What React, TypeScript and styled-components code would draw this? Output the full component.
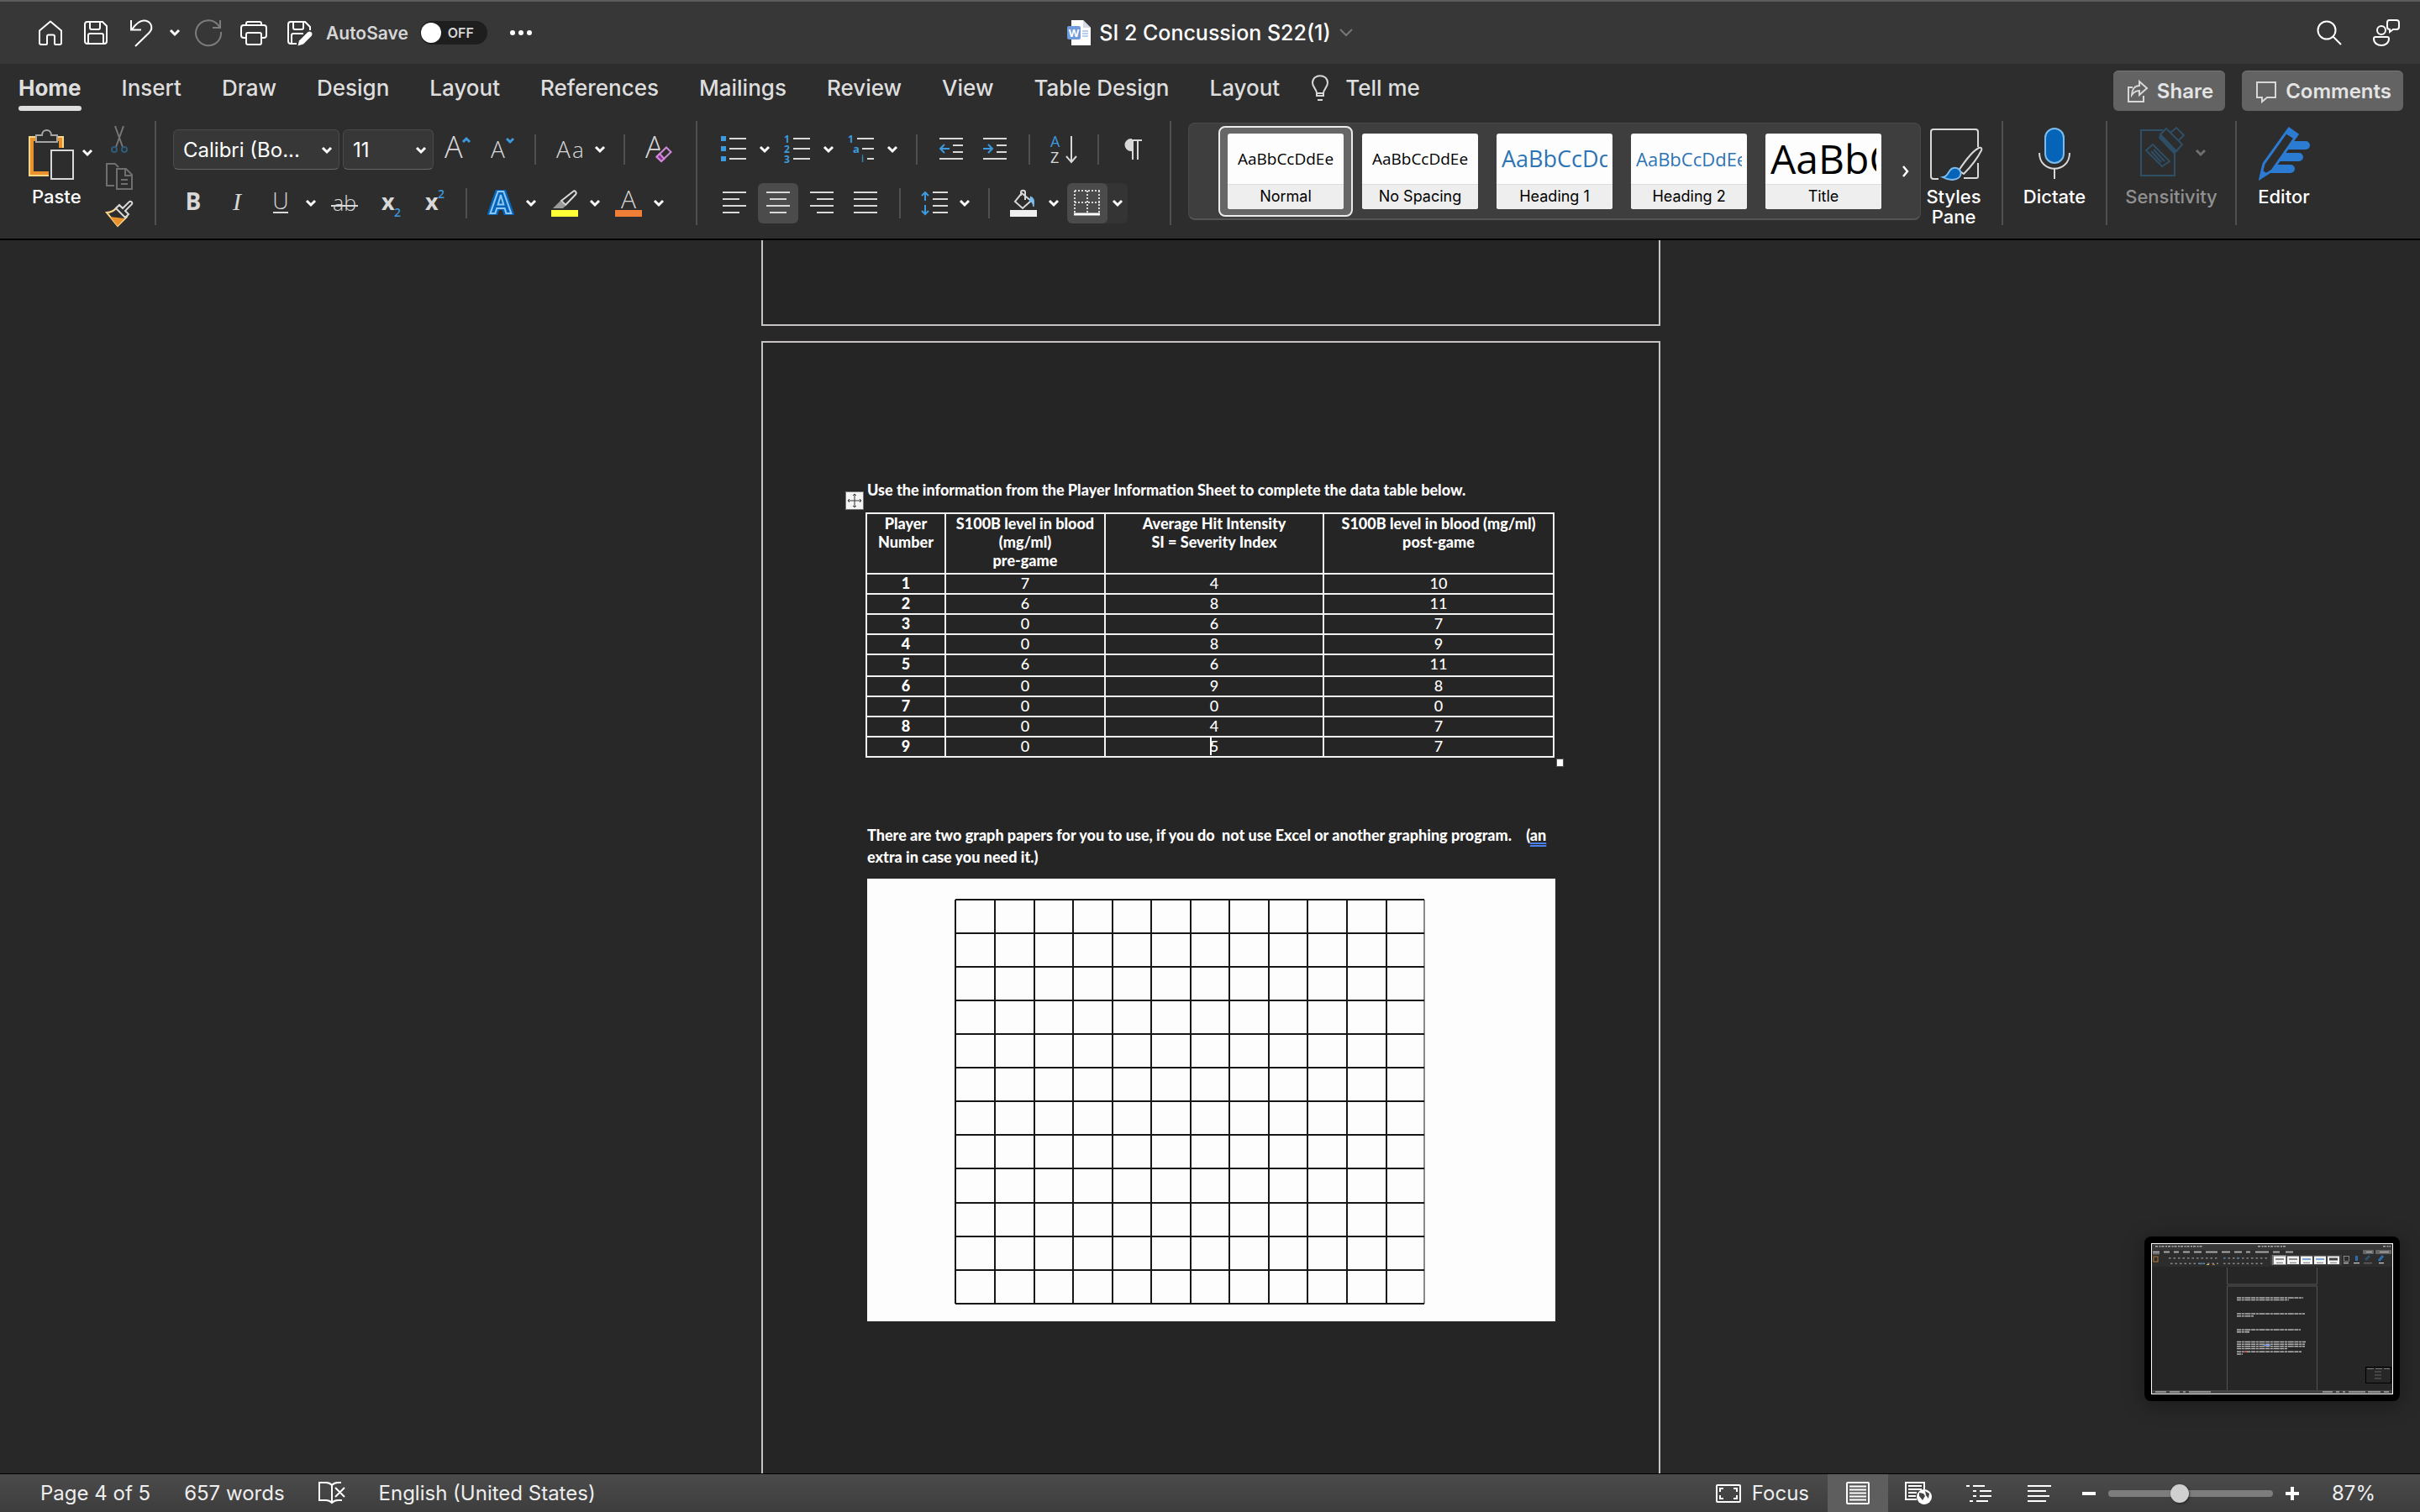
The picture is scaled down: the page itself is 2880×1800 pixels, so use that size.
import React from "react";
import styled, { createGlobalStyle, css } from "styled-components";

const ui = `Inter, "Liberation Sans", sans-serif`;
const glyph = `"Open Sans", "Noto Sans", sans-serif`;
const docFont = `Lato, "Liberation Sans", sans-serif`;
const blue = "#3d9ade";
const ink = "#d8d8d8";
const panel = "#2d2d2d";

const Global = createGlobalStyle`
  *, *::before, *::after { box-sizing: border-box; }
  body { margin: 0; background: #282828; font-family: ${ui}; }
  button, select, input { font: inherit; color: inherit; margin: 0; }
  button { background: none; border: 0; padding: 0; }
  svg { display: block; flex: none; overflow: visible; }
`;

const Window = styled.div`
  height: 100vh;
  display: flex;
  flex-direction: column;
  overflow: hidden;
  color: #ffffff;
`;

/* ---------- title bar ---------- */
const TitleBar = styled.header`
  flex: none;
  height: 76px;
  display: grid;
  grid-template-columns: 1fr auto 1fr;
  align-items: center;
  background: #373737;
  border-top: 2px solid #5c5c5c;
`;
const QuickBar = styled.div`
  display: flex;
  align-items: center;
  padding-left: 33px;
`;
const QuickButton = styled.button<{ $narrow?: boolean }>`
  width: ${(p) => (p.$narrow ? 26 : 54)}px;
  height: 48px;
  display: flex;
  align-items: center;
  justify-content: center;
`;
const AutoSave = styled.label`
  display: flex;
  align-items: center;
  gap: 14px;
  margin: 0 13px 0 5px;
  font-size: 21px;
  font-weight: 600;
  color: #d6d6d6;
`;
const ToggleTrack = styled.span`
  position: relative;
  width: 80px;
  height: 28px;
  border-radius: 14px;
  background: #1e1e1e;
  display: flex;
  align-items: center;
  justify-content: flex-end;
  padding-right: 16px;
  font-size: 16px;
  font-weight: 600;
`;
const ToggleBox = styled.input`
  appearance: none;
  position: absolute;
  left: 1px;
  top: 2px;
  width: 24px;
  height: 24px;
  border-radius: 12px;
  background: #ffffff;
`;
const DocTitle = styled.h1`
  margin: 0;
  display: flex;
  align-items: center;
  gap: 10px;
  font-size: 25px;
  font-weight: 500;
`;
const TitleRight = styled.div`
  display: flex;
  justify-content: flex-end;
  gap: 14px;
  padding-right: 13px;
`;

/* ---------- tabs ---------- */
const TabBar = styled.nav`
  flex: none;
  height: 68px;
  display: flex;
  justify-content: space-between;
  padding: 0 20px 0 22px;
  background: ${panel};
`;
const TabArea = styled.div`
  display: flex;
  align-items: flex-start;
  gap: 38px;
`;
const Tabs = styled.div`
  display: flex;
  gap: 48px;
`;
const Tab = styled.button<{ $active?: boolean }>`
  position: relative;
  height: 56px;
  padding-top: 1px;
  display: flex;
  align-items: center;
  gap: 20px;
  font-size: 26px;
  line-height: 30px;
  font-weight: ${(p) => (p.$active ? 700 : 500)};
  color: #dedede;
  ${(p) =>
    p.$active &&
    css`
      &::after {
        content: "";
        position: absolute;
        left: 0;
        right: 0;
        bottom: 0;
        height: 6px;
        border-radius: 3px;
        background: #dedede;
      }
    `}
`;
const TabActions = styled.div`
  display: flex;
  gap: 20px;
  padding-top: 8px;
`;
const ActionButton = styled.button`
  height: 48px;
  padding: 0 14px 0 16px;
  display: flex;
  align-items: center;
  gap: 10px;
  border-radius: 6px;
  border-top: 1px solid #777777;
  background: #636363;
  font-size: 24px;
  font-weight: 600;
  color: #e4e4e4;
`;

/* ---------- ribbon ---------- */
const Ribbon = styled.div`
  flex: none;
  height: 142px;
  display: flex;
  align-items: flex-start;
  background: ${panel};
  border-bottom: 2px solid #000000;
`;
const Divider = styled.span<{ $small?: boolean }>`
  flex: none;
  width: 2px;
  height: ${(p) => (p.$small ? 36 : 124)}px;
  margin: 0 ${(p) => (p.$small ? 12 : 0)}px;
  background: #505050;
`;
const ToolGroup = styled.div`
  flex: none;
  display: flex;
  flex-direction: column;
  gap: 16px;
  padding: 10px 20px 0;
`;
const ToolRow = styled.div`
  height: 48px;
  display: flex;
  align-items: center;
  gap: 4px;
`;
const Tool = styled.button<{ $active?: boolean }>`
  width: 48px;
  height: 48px;
  display: flex;
  align-items: center;
  justify-content: center;
  border-radius: 6px;
  background: ${(p) => (p.$active ? "#4b4b4b" : "none")};
`;
const Split = styled.span<{ $active?: boolean }>`
  display: flex;
  border-radius: 6px;
  background: ${(p) => (p.$active ? "#343434" : "none")};
`;
const Drop = styled.button`
  width: 24px;
  height: 48px;
  display: flex;
  align-items: center;
  justify-content: center;
`;
const SelectWrap = styled.label<{ $w: number }>`
  position: relative;
  width: ${(p) => p.$w}px;
  height: 48px;
`;
const SelectBox = styled.select`
  appearance: none;
  width: 100%;
  height: 48px;
  padding: 0 0 0 11px;
  border: 1px solid #4a4a4a;
  border-bottom-color: #666666;
  border-radius: 6px;
  background: #373737;
  font-size: 24px;
  color: #ffffff;
`;
const SelectArrow = styled.span`
  position: absolute;
  right: 9px;
  top: 21px;
  pointer-events: none;
`;
const Clipboard = styled.div`
  flex: none;
  display: flex;
  padding: 0 18px 0 32px;
`;
const BigArea = styled.div<{ $w: number; $end?: number }>`
  flex: none;
  width: ${(p) => p.$w}px;
  padding: 6px ${(p) => p.$end ?? 0}px 0 0;
`;
const Big = styled.button<{ $dim?: boolean; $start?: boolean }>`
  width: 100%;
  display: flex;
  flex-direction: column;
  align-items: ${(p) => (p.$start ? "flex-start" : "center")};
  gap: 8px;
  font-size: 22px;
  line-height: 24px;
  font-weight: 500;
  color: ${(p) => (p.$dim ? "#919191" : "#ffffff")};
`;
const BigIcon = styled.span`
  display: flex;
  align-items: center;
  gap: 6px;
`;
const PasteLabel = styled.span`
  padding-left: 6px;
`;
const MiniColumn = styled.div`
  display: flex;
  flex-direction: column;
  padding-left: 2px;
`;
const MiniTool = styled.button`
  width: 48px;
  height: 44px;
  display: flex;
  align-items: center;
  justify-content: center;
`;
const Gallery = styled.div`
  flex: 0 1 872px;
  min-width: 0;
  height: 116px;
  margin: 2px 0 0 20px;
  padding-left: 35px;
  display: flex;
  align-items: center;
  justify-content: space-between;
  border: 1px solid #4a4a4a;
  border-bottom: 2px solid #555555;
  border-radius: 8px;
  background: #3e3e3e;
`;
const Cards = styled.div`
  display: flex;
  overflow: hidden;
`;
const StyleSlot = styled.button<{ $active?: boolean }>`
  flex: none;
  width: 160px;
  height: 108px;
  padding: 7px 9px;
  border: 2px solid ${(p) => (p.$active ? "#ececec" : "transparent")};
  border-radius: 8px;
  background: ${(p) => (p.$active ? "#666666" : "none")};
`;
const StyleCard = styled.span`
  height: 90px;
  display: flex;
  flex-direction: column;
  border-radius: 3px;
  overflow: hidden;
  background: #fdfdfd;
  color: #000000;
`;
const Preview = styled.span<{ $size: number; $color: string }>`
  flex: 1;
  min-height: 0;
  margin: 0 6px;
  display: flex;
  align-items: center;
  justify-content: ${(p) => (p.$size > 20 ? "flex-start" : "center")};
  overflow: hidden;
  white-space: nowrap;
  font-family: ${glyph};
  font-size: ${(p) => p.$size}px;
  line-height: 60px;
  color: ${(p) => p.$color};
`;
const CardName = styled.span`
  height: 30px;
  border-top: 1px solid #dddddd;
  background: #eeeeee;
  font-size: 18px;
  line-height: 28px;
  font-weight: 400;
`;
const GalleryMore = styled.button`
  width: 34px;
  height: 100px;
  display: flex;
  align-items: center;
  justify-content: center;
`;

/* ---------- document ---------- */
const Canvas = styled.main`
  flex: 1;
  min-height: 0;
  display: flex;
  flex-direction: column;
  align-items: center;
  gap: 18px;
  padding-left: 2px;
  overflow: hidden;
  background: #282828;
`;
const PrevPage = styled.div`
  flex: none;
  width: 1070px;
  height: 102px;
  border: 2px solid #c6c2c6;
  border-top: 0;
  background: #252525;
`;
const Page = styled.article`
  flex: 1;
  width: 1070px;
  padding: 162px 123px 0 124px;
  border: 2px solid #c6c2c6;
  border-bottom: 0;
  background: #252525;
  font-family: ${docFont};
  font-size: 18px;
  line-height: 26px;
`;
const Para = styled.p`
  margin: 0;
  font-weight: 900;
  white-space: pre-wrap;
`;
const Flagged = styled.span`
  text-decoration: underline double 2px #4b80f0;
  text-underline-offset: 2px;
`;
const TableHolder = styled.div`
  position: relative;
  margin: 14px 0 79px -2px;
`;
const MoveHandle = styled.span`
  position: absolute;
  left: -24px;
  top: -25px;
  width: 22px;
  height: 22px;
  border: 1px solid #777777;
  background: #f4f4f4;
`;
const SizeHandle = styled.span`
  position: absolute;
  right: -10px;
  bottom: -11px;
  width: 9px;
  height: 10px;
  border: 1px solid #555555;
  background: #ffffff;
`;
const DataTable = styled.table`
  width: 820px;
  table-layout: fixed;
  border-collapse: collapse;
  text-align: center;
  line-height: 20px;
  th,
  td {
    height: 24px;
    padding: 0;
    border: 2px solid #f2f2f2;
    vertical-align: top;
    font-weight: 500;
  }
  th {
    font-weight: 900;
  }
  thead th {
    height: 72px;
    line-height: 22px;
  }
  tbody tr:nth-child(5) td {
    height: 26px;
  }
`;
const Caret = styled.span`
  position: relative;
  &::before {
    content: "";
    position: absolute;
    left: 0;
    top: 0;
    width: 2px;
    height: 22px;
    background: #ffffff;
  }
`;
const GraphPaper = styled.svg`
  width: 100%;
  height: auto;
  margin-top: 13px;
  background: #fdfdfd;
`;
const Thumbnail = styled.aside`
  position: absolute;
  right: 24px;
  bottom: 132px;
  padding: 8px;
  border-radius: 8px;
  background: #000000;
  box-shadow: 0 4px 24px rgba(0, 0, 0, 0.35);
`;

/* ---------- status bar ---------- */
const StatusBar = styled.footer`
  flex: none;
  height: 46px;
  display: flex;
  justify-content: space-between;
  border-top: 1px solid #000000;
  background: linear-gradient(#4b4b4b, #3d3d3d);
  font-size: 24px;
  color: #eeeeee;
`;
const StatusSide = styled.div<{ $gap?: number; $left?: number; $right?: number }>`
  display: flex;
  align-items: center;
  gap: ${(p) => p.$gap ?? 0}px;
  padding: 0 ${(p) => p.$right ?? 0}px 0 ${(p) => p.$left ?? 0}px;
`;
const StatusButton = styled.button`
  display: flex;
  align-items: center;
  gap: 12px;
`;
const ViewButton = styled.button<{ $active?: boolean; $w?: number }>`
  width: ${(p) => p.$w ?? 72}px;
  height: 45px;
  display: flex;
  align-items: center;
  justify-content: center;
  background: ${(p) => (p.$active ? "#5e5e5e" : "none")};
`;
const Zoom = styled.input`
  appearance: none;
  width: 196px;
  height: 8px;
  border-radius: 4px;
  background: #7d7d7d;
  &::-webkit-slider-thumb {
    appearance: none;
    width: 22px;
    height: 22px;
    border-radius: 11px;
    background: #d0d0d0;
    box-shadow: 1px 1px 3px rgba(0, 0, 0, 0.5);
  }
`;
const Percent = styled.output`
  padding-left: 24px;
`;

/* ---------- drawings ---------- */
type IconProps = { children: React.ReactNode; w?: number; h?: number; c?: string; sw?: number };
const Icon = ({ children, w = 32, h = 32, c = ink, sw = 2 }: IconProps) => (
  <svg width={w} height={h} viewBox={`0 0 ${w} ${h}`} fill="none" stroke={c} strokeWidth={sw} aria-hidden="true">
    {children}
  </svg>
);
const Chevron = ({ c = "#ffffff" }: { c?: string }) => (
  <Icon w={12} h={8} c={c} sw={3}>
    <path d="M1 1l5 5 5-5" />
  </Icon>
);
type LetterProps = {
  children: string; x: number; y: number; s: number; c?: string; wt?: number; f?: string; it?: boolean; mid?: boolean;
};
const Letter = ({ children, x, y, s, c = ink, wt = 400, f = glyph, it, mid }: LetterProps) => (
  <text x={x} y={y} fontSize={s} fill={c} stroke="none" fontWeight={wt} fontFamily={f}
    fontStyle={it ? "italic" : "normal"} textAnchor={mid ? "middle" : "start"}>
    {children}
  </text>
);
const Lines = ({ rows }: { rows: [number, number][] }) => (
  <Icon>
    {rows.map(([a, b], i) => (
      <path key={i} d={`M${a} ${3 + i * 8}H${b}`} />
    ))}
  </Icon>
);

const quick = {
  home: <Icon c="#fff"><path d="M3 13.500L16 2.500l13 11V28a2 2 0 0 1-2 2h-5a1 1 0 0 1-1-1v-8.500a2 2 0 0 0-2-2h-5a2 2 0 0 0-2 2V29a1 1 0 0 1-1 1H5a2 2 0 0 1-2-2z" strokeLinejoin="round" /></Icon>,
  save: <Icon c="#fff"><path d="M6 3h18l5 5v18a3 3 0 0 1-3 3H6a3 3 0 0 1-3-3V6a3 3 0 0 1 3-3zM9 3v7a2 2 0 0 0 2 2h8a2 2 0 0 0 2-2V3M7 29V19a2 2 0 0 1 2-2h14a2 2 0 0 1 2 2v10" /></Icon>,
  undo: <Icon c="#fff"><path d="M4 1v11.500h12M5 12C10 5 14 1.500 19 1.500c9 0 12 9 6.500 14.500L9 32" /></Icon>,
  redo: <Icon c="#7c7c7c"><path d="M31 15a15 15 0 1 1-4.500-9.500L30 10M30 1v9H21" /></Icon>,
  print: <Icon c="#fff"><path d="M7 22H4a3 3 0 0 1-3-3V10a3 3 0 0 1 3-3h24a3 3 0 0 1 3 3v9a3 3 0 0 1-3 3h-3M7 7V5a2 2 0 0 1 2-2h14a2 2 0 0 1 2 2v2" /><rect x="7" y="16" width="18" height="14" rx="2" /></Icon>,
  saveEdit: <Icon c="#fff"><path d="M13 29H6a3 3 0 0 1-3-3V6a3 3 0 0 1 3-3h17l6 6v4M9 3v7a2 2 0 0 0 2 2h8a2 2 0 0 0 2-2V3M7 29V19a2 2 0 0 1 2-2h12" /><path d="M26 15.500c3-3 7.500 1 4.500 4.500l-9.500 9.500-6.500 2 1.500-6z" fill="#fff" stroke="none" /></Icon>,
};

const EraseFormat = (
  <Icon>
    <Letter x={0} y={26} s={36} wt={300}>A</Letter>
    <path d="M25.300 12.300L32 19 19.300 31.300 12.700 24.700z" fill={panel} stroke={panel} strokeWidth={5} />
    <path d="M25 13.500L30.500 19 19 30 13.500 24.700z" stroke="#cf8ad6" />
    <path d="M17 21l5.500 6L19 30l-5.500-5.300z" fill="#8b2f97" stroke="#cf8ad6" />
  </Icon>
);
const BulletIcon = (
  <Icon>
    {[0, 12, 24].map((y) => (
      <g key={y}><rect x="0" y={y} width="6" height="6" fill={blue} stroke="none" /><path d={`M10 ${y + 3}H30`} /></g>
    ))}
  </Icon>
);
const NumberIcon = (
  <Icon>
    {["1", "2", "3"].map((n, i) => (
      <g key={n}><Letter x={-1} y={8 + i * 12} s={12} wt={700} c={blue}>{n}</Letter><path d={`M10 ${3 + i * 12}H30`} /></g>
    ))}
  </Icon>
);
const MultiIcon = (
  <Icon>
    <Letter x={-1} y={8} s={12} wt={700} c={blue}>1</Letter>
    <Letter x={5} y={20} s={13} wt={700} c={blue}>a</Letter>
    <Letter x={15} y={31} s={13} c={blue}>i</Letter>
    <path d="M10 3H30M16 15H30M22 27H30" />
  </Icon>
);
const IndentIcon = ({ out }: { out?: boolean }) => (
  <Icon>
    <path d="M2 3H30M18 11H30M18 19H30M2 27H30" />
    <path d={out ? "M14 15H3M8 10l-5 5 5 5" : "M2 15H13M8 10l5 5-5 5"} stroke={blue} />
  </Icon>
);
const SortIcon = (
  <Icon>
    <Letter x={0} y={13} s={18} c={blue}>A</Letter>
    <Letter x={0} y={32} s={18}>Z</Letter>
    <path d="M25 0V30M19 24l6 7 6-7" />
  </Icon>
);
const PilcrowIcon = (
  <Icon>
    <path d="M14 5v12a6 6 0 0 1 0-13z" fill={ink} />
    <path d="M13 5H27M16 5V28M22 5V28" />
  </Icon>
);
const GlowLetter = styled.text`
  font-family: ${glyph};
  font-size: 36px;
  font-weight: 700;
  text-anchor: middle;
  fill: #0563b8;
  stroke: #8cc7f2;
  stroke-width: 2px;
  filter: drop-shadow(2px 0 0 #0563b8) drop-shadow(-2px 0 0 #0563b8) drop-shadow(0 1px 0 #0563b8) drop-shadow(0 -1px 0 #0563b8);
`;
const TextEffects = (
  <Icon>
    <GlowLetter x="16" y="28">A</GlowLetter>
  </Icon>
);
const Highlighter = (
  <Icon>
    <path d="M26 2c2-2 5 1 3 3.500L17 18l-5-5z" />
    <path d="M11 13l6 6-3 3H2z" fill="#9a9a9a" stroke="none" />
    <rect y="24" width="32" height="8" fill="#ffff38" stroke="none" />
  </Icon>
);
const FontColor = (
  <Icon>
    <Letter x={16} y={22} s={30} wt={300} mid>A</Letter>
    <rect y="24" width="32" height="8" fill="#ef7f36" stroke="none" />
  </Icon>
);
const SpacingIcon = (
  <Icon>
    <path d="M14 3H32M14 11H32M14 19H32M14 27H32" />
    <path d="M5 13V3M1 7l4-4 4 4M5 18v11M1 25l4 4 4-4" stroke={blue} />
  </Icon>
);
const BucketIcon = (
  <Icon>
    <path d="M14 4l11 9-10 9-9-8zM13 7V3c0-3 5-3 5 0v9" />
    <path d="M24 8c5 1 5 6 4 12-1-4-2-6-5-7" fill="#7cbcec" stroke="#7cbcec" strokeWidth="1" />
    <rect y="24" width="32" height="8" fill="#efefef" stroke="none" />
  </Icon>
);
const BordersIcon = (
  <Icon>
    <path d="M1 1H31M1 15H31M1 1V27M16 1V27M30 1V27" strokeDasharray="2 2" />
    <path d="M0 29H31" stroke="#fff" strokeWidth="3" />
  </Icon>
);
const PasteIcon = (
  <Icon w={60} h={64}>
    <rect x="3" y="13" width="40" height="46" fill="#e8912d" stroke="#fbd789" />
    <rect x="8" y="18" width="30" height="36" fill={panel} stroke="none" />
    <path d="M11 19V11h7c0-8 11-8 11 0h7v8z" fill={panel} stroke="#a5a5a5" />
    <rect x="26" y="26" width="32" height="38" fill={panel} stroke="none" />
    <rect x="29" y="29" width="26" height="34" stroke={ink} />
  </Icon>
);
const CutIcon = (
  <Icon c="#777">
    <path d="M11 0l9 25M21 0l-9 25" />
    <g stroke="#2f5c7b"><circle cx="10" cy="28" r="3" /><circle cx="22" cy="28" r="3" /></g>
  </Icon>
);
const CopyIcon = (
  <Icon c="#6f6f6f">
    <path d="M10 27H1V1h10l4 4M13 7h11l7 7v17H13zM23 7v8h8M18 20h8M18 25h8" />
  </Icon>
);
const BrushIcon = (
  <Icon>
    <path d="M1 15q7 0 12-6l12 11-11 11z" fill={panel} stroke="#fbd789" />
    <path d="M5 20l17 2-8 9z" fill="#e8912d" stroke="none" />
    <path d="M12 10l4-4 4 4 8-8c2-1 4 1 3 3l-8 8 4 4-4 4z" fill={panel} />
  </Icon>
);
const StylesPaneIcon = (
  <Icon w={64} h={64}>
    <path d="M14 63H8a3 3 0 0 1-3-3V7a3 3 0 0 1 3-3h50a3 3 0 0 1 3 3v18M61 44v16a2 2 0 0 1-2 2H44" />
    <path d="M38 53c10-15 18-24 24-27 3-1 4 1 3 3-5 10-12 19-21 28z" fill={panel} />
    <path d="M19 61c8-1 6-10 13-11 6-1 10 4 8 9-2 5-12 7-21 2z" fill="#0563b8" stroke="#7cbcec" />
  </Icon>
);
const DictateIcon = (
  <Icon w={64} h={64}>
    <rect x="21" y="3" width="22" height="41" rx="11" fill="#0563b8" stroke="#7cbcec" />
    <path d="M14 32c0 25 36 25 36 0M32 51v12" />
  </Icon>
);
const SensitivityIcon = (
  <Icon w={64} h={64} c="#2f4f67">
    <path d="M31 5H5v54h40V32" />
    <path d="M19 22l20 20-9 6-19-19zM20 28l13 14M17 30l12 13" />
    <path d="M28 10l7-7 19 19-7 8z" />
    <path d="M28 11l19 19-3 2-17-18z" fill="#2f4f67" />
    <path d="M40 8l7-6 9 9-6 6" />
  </Icon>
);
const EditorIcon = (
  <Icon w={64} h={64} c="#2b7bd3">
    <path d="M35 18h23a5 5 0 0 1 0 10H30zM28 32h22a5 5 0 0 1 0 10H22zM22 46h18a5 5 0 0 1 0 10H12z" fill="#2b7bd3" stroke="none" />
    <path d="M38 3l10 7-30 43-14 9 4-17z" fill={panel} strokeWidth="3" />
    <path d="M38 2l11 8-4 6-11-7zM3 63l2-11 8 5z" fill="#2b7bd3" stroke="none" />
  </Icon>
);

const cols = [0, 47, 94, 140, 187, 233, 280, 326, 373, 419, 466, 513, 558];
const rowsY = [0, 40, 80, 120, 160, 200, 240, 280, 320, 361, 401, 441, 481];
const Graph = () => (
  <GraphPaper viewBox="0 0 819 527" role="img" aria-label="Blank graph paper, twelve by twelve squares">
    <g transform="translate(105 25)" stroke="#151815" strokeWidth="2" fill="none">
      {cols.map((x) => <path key={x} d={`M${x} 0V481`} strokeWidth={x === 558 ? 1 : 2} />)}
      {rowsY.map((y) => <path key={y} d={`M0 ${y}H558`} />)}
    </g>
  </GraphPaper>
);

const miniText: [number, number, number][] = [
  [102, 65, 79], [102, 67.5, 62], [102, 84, 81], [102, 86.8, 20], [102, 103, 76], [102, 105.6, 15],
  [102, 117.5, 82], [102, 120.2, 81], [102, 122.8, 81], [102, 125.5, 60], [102, 129.3, 77], [102, 132, 7],
];
const MiniWindow = () => (
  <svg width="288" height="180" viewBox="0 0 288 180" aria-hidden="true">
    <rect width="288" height="180" fill="#fff" />
    <rect x="1" y="1" width="286" height="178" fill="#262626" />
    <rect x="1" y="1" width="286" height="7" fill="#373737" />
    <rect x="1" y="8" width="286" height="20" fill="#2d2d2d" />
    <g stroke="#aaa" strokeWidth="1.500" strokeDasharray="3 1.500 2 1">
      <path d="M5 3.700H62M127 3.700H160M276 3.700H285" />
    </g>
    <path d="M2 10.500H10M15 10.500H22M27 10.500H33M38 10.500H46M51 10.500H60M65 10.500H79M84 10.500H94M99 10.500H108M113 10.500H118M124 10.500H140M145 10.500H153M160 10.500H169" stroke="#a8a8a8" strokeWidth="1.800" />
    <path d="M2 12.800H10" stroke="#ddd" strokeWidth="0.600" />
    <rect x="252" y="8" width="13" height="5" rx="1" fill="#666" />
    <rect x="267" y="8" width="19" height="5" rx="1" fill="#666" />
    <path d="M256 10.500H263M272 10.500H283" stroke="#bbb" />
    <rect x="3" y="16" width="5" height="6" fill="none" stroke="#b87a35" />
    <g stroke="#888" strokeWidth="1.600" strokeDasharray="2.500 3">
      <path d="M21 17.700H80M86 17.700H138M23 24.300H80M86 24.300H134" />
    </g>
    <path d="M58 24.300h3M86 17.700h2M102 17.700h2" stroke="#2f7ab0" strokeWidth="2" />
    <path d="M66 25.500h3" stroke="#c8c838" /><path d="M73 25.500h3" stroke="#b86a36" />
    <rect x="142" y="14" width="85" height="12" fill="#3e3e3e" />
    <rect x="144" y="14" width="17" height="12" fill="#777" />
    {[0, 1, 2, 3, 4].map((i) => (
      <g key={i}>
        <rect x={146 + i * 16} y="15.500" width="14" height="9.500" fill="#f4f4f4" />
        <path d={`M${148 + i * 16} 19h10`} stroke={i === 2 || i === 3 ? "#2e74b5" : "#444"} strokeWidth={i === 4 ? 3 : 1.2} />
        <path d={`M${149 + i * 16} 23.300h8`} stroke="#777" strokeWidth="1" />
      </g>
    ))}
    <rect x="229.500" y="15.500" width="6" height="6" fill="none" stroke="#aaa" strokeWidth="0.700" />
    <path d="M229 23.700h6M241 23.700h7M271 23.700h6" stroke="#ccc" strokeWidth="1.300" />
    <path d="M253 23.700h10" stroke="#666" strokeWidth="1.300" />
    <path d="M244.500 15v6M276 15l-5 6" stroke="#2b6db0" strokeWidth="3" />
    <path d="M255 20l5-5" stroke="#2f4f67" strokeWidth="3" />
    <path d="M90.500 29V49H197.500V29M90.500 175V51H197.500V175" fill="none" stroke="#555" />
    <g stroke="#b4b4b4" strokeWidth="1.600" strokeDasharray="5 0.700 3 0.700 7 0.700">
      {miniText.map(([x, y, w]) => <path key={y} d={`M${x} ${y}h${w}`} />)}
    </g>
    <path d="M134 121.500h8" stroke="#4b80f0" /><path d="M111 129.300h3" stroke="#e05050" strokeWidth="1.500" />
    <rect x="255.500" y="147.500" width="30" height="19" fill="#262626" stroke="#000" />
    <path d="M257 149.500h27" stroke="#777" strokeDasharray="8 2" />
    <path d="M266 153h8M266 157h8M266 161h8" stroke="#666" />
    <rect x="1" y="175" width="286" height="4" fill="#444" />
    <path d="M5 177h13M22 177h12M38 177h3M45 177h26M204 177h12M220 177h4M228 177h3M235 177h20M258 177h15M277 177h6" stroke="#aaa" strokeWidth="1.500" />
  </svg>
);

/* ---------- content ---------- */
const tabNames = ["Home", "Insert", "Draw", "Design", "Layout", "References", "Mailings", "Review", "View", "Table Design", "Layout"];
const styleCards = [
  { name: "Normal", text: "AaBbCcDdEe", size: 19, color: "#000000" },
  { name: "No Spacing", text: "AaBbCcDdEe", size: 19, color: "#000000" },
  { name: "Heading 1", text: "AaBbCcDdEe", size: 27, color: "#2e74b5" },
  { name: "Heading 2", text: "AaBbCcDdEe", size: 22, color: "#2e74b5" },
  { name: "Title", text: "AaBbCcDdEe", size: 48, color: "#000000" },
];
const readings = [
  [1, 7, 4, 10], [2, 6, 8, 11], [3, 0, 6, 7], [4, 0, 8, 9], [5, 6, 6, 11],
  [6, 0, 9, 8], [7, 0, 0, 0], [8, 0, 4, 7], [9, 0, 5, 7],
];

const SplitTool = ({ name, icon, active }: { name: string; icon: React.ReactNode; active?: boolean }) => (
  <Split $active={active}>
    <Tool $active={active} aria-label={name}>{icon}</Tool>
    <Drop aria-label={`${name} options`}><Chevron /></Drop>
  </Split>
);

export default function App() {
  return (
    <Window>
      <Global />
      <TitleBar>
        <QuickBar>
          <QuickButton aria-label="Home">{quick.home}</QuickButton>
          <QuickButton aria-label="Save">{quick.save}</QuickButton>
          <QuickButton aria-label="Undo">{quick.undo}</QuickButton>
          <QuickButton $narrow aria-label="Undo history"><Chevron /></QuickButton>
          <QuickButton aria-label="Redo">{quick.redo}</QuickButton>
          <QuickButton aria-label="Print">{quick.print}</QuickButton>
          <QuickButton aria-label="Save as">{quick.saveEdit}</QuickButton>
          <AutoSave>
            AutoSave
            <ToggleTrack><ToggleBox type="checkbox" />OFF</ToggleTrack>
          </AutoSave>
          <QuickButton aria-label="More">
            <Icon w={26} h={6} c="none"><g fill="#fff"><circle cx="3" cy="3" r="3" /><circle cx="13" cy="3" r="3" /><circle cx="23" cy="3" r="3" /></g></Icon>
          </QuickButton>
        </QuickBar>
        <DocTitle>
          <Icon w={28} h={30} c="none">
            <path d="M5 0h14l9 9v21H5z" fill="#fff" />
            <path d="M19 0l9 9h-9z" fill="#d5dbe6" />
            <path d="M18 13h7M18 16h7M18 19h7" stroke="#6fa0e0" strokeWidth="1" />
            <rect y="7" width="16" height="16" rx="2" fill="#6f9bdc" />
            <Letter x={8} y={20} s={13} wt={700} c="#ffffff" mid>W</Letter>
          </Icon>
          SI 2 Concussion S22(1)
          <Icon w={16} h={10} c="#777"><path d="M1 1l7 7 7-7" /></Icon>
        </DocTitle>
        <TitleRight>
          <QuickButton aria-label="Search"><Icon c="#fff"><circle cx="13" cy="13" r="10.500" /><path d="M20.500 20.500L30 30" /></Icon></QuickButton>
          <QuickButton aria-label="Account">
            <Icon c="#fff">
              <circle cx="10" cy="13" r="5" /><path d="M3 21h14a2 2 0 0 1 2 2c0 5-4 8-9 8s-9-3-9-8a2 2 0 0 1 2-2z" />
              <path d="M19 1h9a3 3 0 0 1 3 3v5a3 3 0 0 1-3 3h-4l-4 3v-3a3 3 0 0 1-3-3V4a3 3 0 0 1 2-3z" />
            </Icon>
          </QuickButton>
        </TitleRight>
      </TitleBar>

      <TabBar aria-label="Ribbon tabs">
        <TabArea>
          <Tabs>
            {tabNames.map((t, i) => <Tab key={i} $active={i === 0}>{t}</Tab>)}
          </Tabs>
          <Tab>
            <Icon w={20} h={32}>
              <path d="M6 22c0-5-5-7-5-12.500C1 -1.500 19 -1.500 19 9.500 19 15 14 17 14 22v3H6zM6 22h8M7 30h6" />
            </Icon>
            Tell me
          </Tab>
        </TabArea>
        <TabActions>
          <ActionButton>
            <Icon w={26} h={28}><path d="M7 9H2v17h18v-7M15 2l9 8-9 8v-5c-5 0-7 2-9 5 0-6 3-11 9-11z" /></Icon>
            Share
          </ActionButton>
          <ActionButton>
            <Icon w={26} h={28}><path d="M2 3h22v18H14l-6 5v-5H2z" /></Icon>
            Comments
          </ActionButton>
        </TabActions>
      </TabBar>

      <Ribbon>
        <Clipboard>
          <BigArea $w={84}>
            <Big $start>
              <BigIcon>{PasteIcon}<Chevron /></BigIcon>
              <PasteLabel>Paste</PasteLabel>
            </Big>
          </BigArea>
          <MiniColumn>
            <MiniTool aria-label="Cut">{CutIcon}</MiniTool>
            <MiniTool aria-label="Copy">{CopyIcon}</MiniTool>
            <MiniTool aria-label="Format painter">{BrushIcon}</MiniTool>
          </MiniColumn>
        </Clipboard>
        <Divider />
        <ToolGroup>
          <ToolRow>
            <SelectWrap $w={198}>
              <SelectBox aria-label="Font"><option>Calibri (Bo...</option></SelectBox>
              <SelectArrow><Chevron /></SelectArrow>
            </SelectWrap>
            <SelectWrap $w={108}>
              <SelectBox aria-label="Font size"><option>11</option></SelectBox>
              <SelectArrow><Chevron /></SelectArrow>
            </SelectWrap>
            <Tool aria-label="Increase font size">
              <Icon><Letter x={1} y={26} s={36} wt={300}>A</Letter><path d="M23 7l4-4 4 4" stroke={blue} strokeWidth="3" /></Icon>
            </Tool>
            <Tool aria-label="Decrease font size">
              <Icon><Letter x={4} y={26} s={28} wt={300}>A</Letter><path d="M23 3l4 4 4-4" stroke={blue} strokeWidth="3" /></Icon>
            </Tool>
            <Divider $small />
            <SplitTool name="Change case" icon={<Icon><Letter x={0} y={26} s={28} wt={300}>A</Letter><Letter x={19} y={26} s={26} wt={300}>a</Letter></Icon>} />
            <Divider $small />
            <Tool aria-label="Clear formatting">{EraseFormat}</Tool>
          </ToolRow>
          <ToolRow>
            <Tool aria-label="Bold"><Icon><Letter x={16} y={24} s={28} wt={700} mid>B</Letter></Icon></Tool>
            <Tool aria-label="Italic"><Icon><Letter x={16} y={24} s={30} f={`"Liberation Serif", serif`} it mid>I</Letter></Icon></Tool>
            <SplitTool name="Underline" icon={<Icon><Letter x={16} y={23} s={27} wt={300} mid>U</Letter><path d="M7 27H25" /></Icon>} />
            <Tool aria-label="Strikethrough"><Icon><Letter x={16} y={25} s={25} wt={300} mid>ab</Letter><path d="M0 19H32" /></Icon></Tool>
            <Tool aria-label="Subscript"><Icon><Letter x={8} y={24} s={27} wt={700}>x</Letter><Letter x={23} y={32} s={14} wt={600} c={blue}>2</Letter></Icon></Tool>
            <Tool aria-label="Superscript"><Icon><Letter x={8} y={24} s={27} wt={700}>x</Letter><Letter x={23} y={10} s={14} wt={600} c={blue}>2</Letter></Icon></Tool>
            <Divider $small />
            <SplitTool name="Text effects" icon={TextEffects} />
            <SplitTool name="Highlight" icon={Highlighter} />
            <SplitTool name="Font color" icon={FontColor} />
          </ToolRow>
        </ToolGroup>
        <Divider />
        <ToolGroup>
          <ToolRow>
            <SplitTool name="Bullets" icon={BulletIcon} />
            <SplitTool name="Numbering" icon={NumberIcon} />
            <SplitTool name="Multilevel list" icon={MultiIcon} />
            <Divider $small />
            <Tool aria-label="Decrease indent"><IndentIcon out /></Tool>
            <Tool aria-label="Increase indent"><IndentIcon /></Tool>
            <Divider $small />
            <Tool aria-label="Sort">{SortIcon}</Tool>
            <Divider $small />
            <Tool aria-label="Show marks">{PilcrowIcon}</Tool>
          </ToolRow>
          <ToolRow>
            <Tool aria-label="Align left"><Lines rows={[[2, 30], [2, 22], [2, 30], [2, 22]]} /></Tool>
            <Tool $active aria-label="Align center"><Lines rows={[[2, 30], [6, 26], [2, 30], [6, 26]]} /></Tool>
            <Tool aria-label="Align right"><Lines rows={[[2, 30], [10, 30], [2, 30], [10, 30]]} /></Tool>
            <Tool aria-label="Justify"><Lines rows={[[2, 30], [2, 30], [2, 30], [2, 30]]} /></Tool>
            <Divider $small />
            <SplitTool name="Line spacing" icon={SpacingIcon} />
            <Divider $small />
            <SplitTool name="Shading" icon={BucketIcon} />
            <SplitTool name="Borders" icon={BordersIcon} active />
          </ToolRow>
        </ToolGroup>
        <Divider />
        <Gallery>
          <Cards>
            {styleCards.map((s, i) => (
              <StyleSlot key={s.name} $active={i === 0}>
                <StyleCard>
                  <Preview $size={s.size} $color={s.color}>{s.text}</Preview>
                  <CardName>{s.name}</CardName>
                </StyleCard>
              </StyleSlot>
            ))}
          </Cards>
          <GalleryMore aria-label="More styles"><Icon w={8} h={14} c="#fff" sw={2.5}><path d="M1 1l5 6-5 6" /></Icon></GalleryMore>
        </Gallery>
        <BigArea $w={96} $end={18}><Big>{StylesPaneIcon}<span>Styles<br />Pane</span></Big></BigArea>
        <Divider />
        <BigArea $w={122}><Big>{DictateIcon}<span>Dictate</span></Big></BigArea>
        <Divider />
        <BigArea $w={152}>
          <Big $dim><BigIcon>{SensitivityIcon}<Chevron c="#6f6f6f" /></BigIcon><span>Sensitivity</span></Big>
        </BigArea>
        <Divider />
        <BigArea $w={112}><Big>{EditorIcon}<span>Editor</span></Big></BigArea>
      </Ribbon>

      <Canvas>
        <PrevPage />
        <Page>
          <Para>Use the information from the Player Information Sheet to complete the data table below.</Para>
          <TableHolder>
            <MoveHandle>
              <Icon w={20} h={20} c="#333" sw={1}><path d="M10 2V18M2 10H18M8 4l2-2 2 2M8 16l2 2 2-2M4 8l-2 2 2 2M16 8l2 2-2 2" /></Icon>
            </MoveHandle>
            <DataTable>
              <colgroup><col width={94} /><col width={190} /><col width={260} /><col width={274} /></colgroup>
              <thead>
                <tr>
                  <th scope="col">Player<br />Number</th>
                  <th scope="col">S100B level in blood<br />(mg/ml)<br />pre-game</th>
                  <th scope="col">Average Hit Intensity<br />SI = Severity Index</th>
                  <th scope="col">S100B level in blood (mg/ml)<br />post-game</th>
                </tr>
              </thead>
              <tbody>
                {readings.map(([n, pre, hit, post]) => (
                  <tr key={n}>
                    <th scope="row">{n}</th>
                    <td>{pre}</td>
                    <td>{n === 9 ? <Caret>{hit}</Caret> : hit}</td>
                    <td>{post}</td>
                  </tr>
                ))}
              </tbody>
            </DataTable>
            <SizeHandle />
          </TableHolder>
          <Para>There are two graph papers for you to use, if you do  not use Excel or another graphing program.    (<Flagged>an</Flagged> extra in case you need it.)</Para>
          <Graph />
        </Page>
      </Canvas>
      <Thumbnail aria-label="Screenshot preview"><MiniWindow /></Thumbnail>

      <StatusBar>
        <StatusSide $gap={40} $left={48}>
          <StatusButton>Page 4 of 5</StatusButton>
          <StatusButton>657 words</StatusButton>
          <StatusButton aria-label="Proofing errors">
            <Icon c="#fff"><path d="M16 27V6c-2-2-4-3-7-3H1v21h8c3 0 5 1 7 3 2-2 4-3 7-3h5M16 6c2-2 4-3 7-3h4M20 9l11 11M31 9L20 20" /></Icon>
          </StatusButton>
          <StatusButton>English (United States)</StatusButton>
        </StatusSide>
        <StatusSide $right={53}>
          <StatusSide $right={22}>
            <StatusButton>
              <Icon w={32} h={24} c="#fff"><rect x="2" y="2" width="28" height="20" rx="1" /><path d="M6 10V6h4M22 6h4v4M26 14v4h-4M10 18H6v-4" /></Icon>
              Focus
            </StatusButton>
          </StatusSide>
          <ViewButton $active aria-label="Print layout">
            <Icon w={28} h={28} c="#fff"><rect x="1" y="1" width="26" height="25" rx="1" /><path d="M4 5.500h20M4 9.500h20M4 13.500h20M4 17.500h20M4 21.500h20" /></Icon>
          </ViewButton>
          <ViewButton aria-label="Web layout">
            <Icon c="#fff"><path d="M14 23H1V3h22v8M4 7h16M4 11h16M4 15h10M4 19h9" /><circle cx="23" cy="20" r="9" fill="#fff" stroke="none" /><path d="M17 15l5 1 2 3-3 5-4-5zM24 13l5 3-1 6-3-4z" fill="#444" stroke="none" /></Icon>
          </ViewButton>
          <ViewButton aria-label="Outline">
            <Icon w={30} h={24} c="#fff"><path d="M0 3h4M8 3h14M8 9h4M16 9h14M8 15h4M16 15h14M4 21h4M12 21h14" /></Icon>
          </ViewButton>
          <ViewButton aria-label="Draft">
            <Icon w={28} h={24} c="#fff"><path d="M0 3h28M0 9h22M0 15h26M0 21h22" /></Icon>
          </ViewButton>
          <ViewButton $w={46} aria-label="Zoom out"><Icon w={16} h={16} c="#fff" sw={4}><path d="M0 8h16" /></Icon></ViewButton>
          <Zoom type="range" min={0} max={200} defaultValue={85} aria-label="Zoom" />
          <ViewButton $w={46} aria-label="Zoom in"><Icon w={16} h={16} c="#fff" sw={4}><path d="M0 8h16M8 0v16" /></Icon></ViewButton>
          <Percent>87%</Percent>
        </StatusSide>
      </StatusBar>
    </Window>
  );
}
